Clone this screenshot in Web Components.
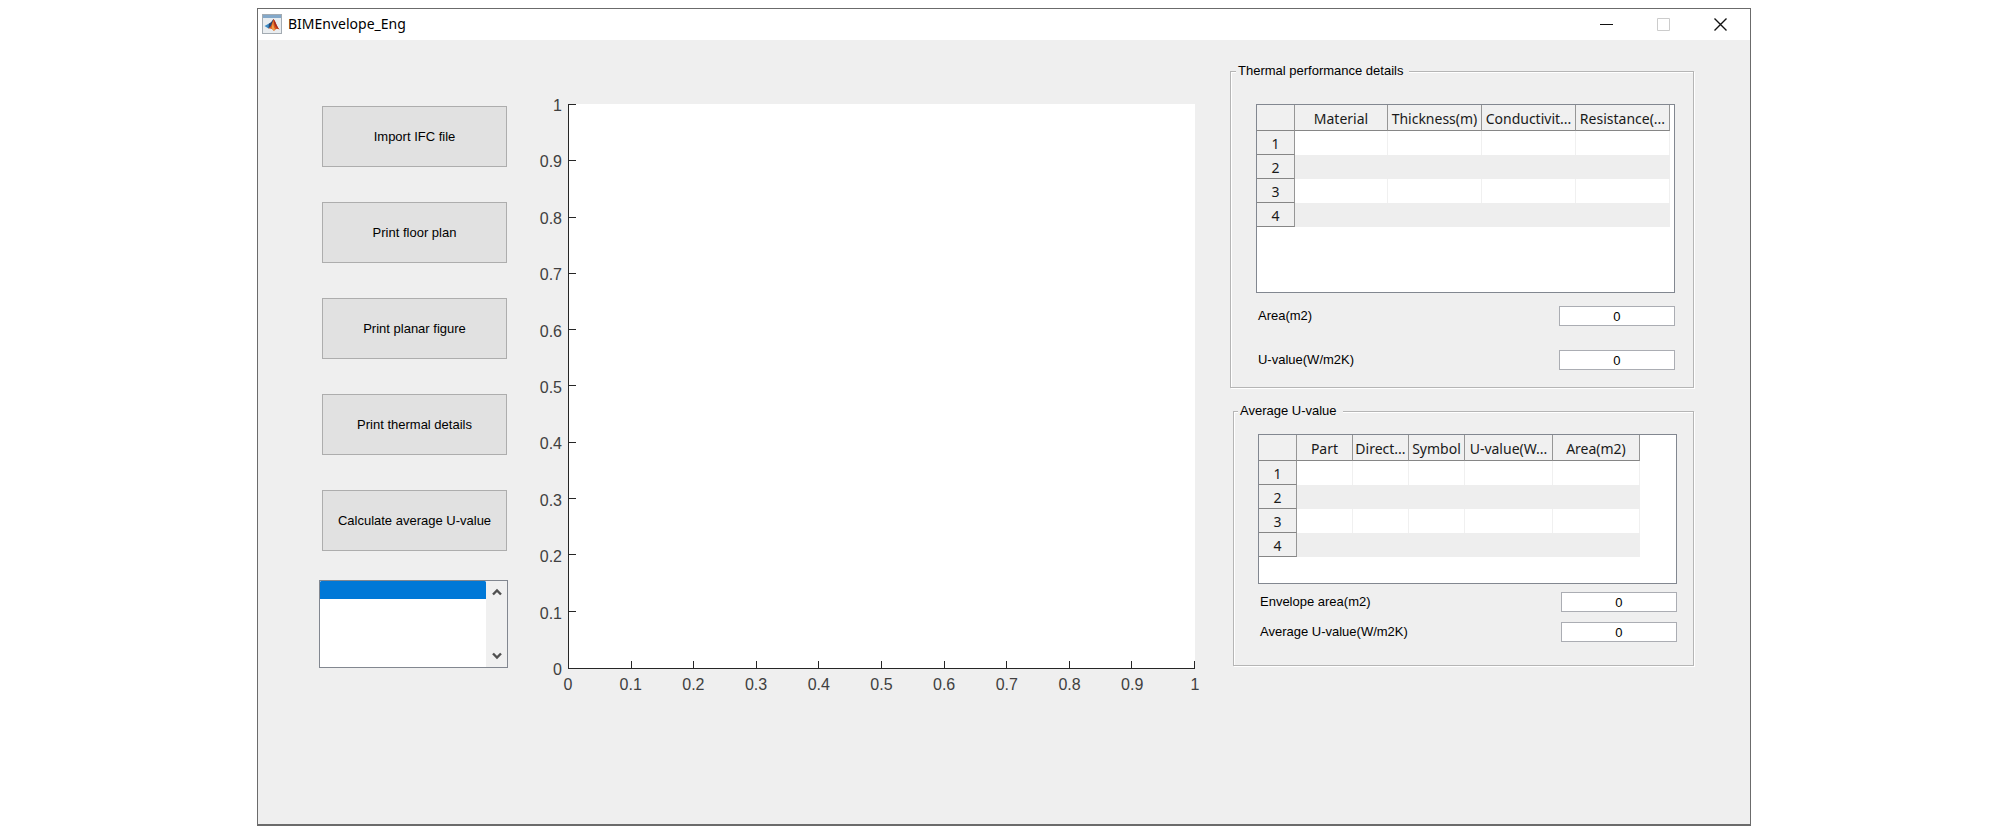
<!DOCTYPE html>
<html lang="en">
<head>
<meta charset="UTF-8">
<title>BIMEnvelope_Eng</title>
<style>
  * { box-sizing: border-box; }

  body {
    margin: 0;
    padding: 8px 12.8% 5px;
    background: #fff;
    color: #000;
    font-family: "Liberation Sans", Arial, sans-serif;
    font-size: 14px;
  }

  .workspace {
    display: grid;
    grid-template-columns: 189px minmax(0, 1fr) 464px;
    column-gap: 35px;
    padding: 57px 56px 130px 61px;
  }

  .actions {
    display: flex;
    flex-direction: column;
    gap: 35px;
    padding-top: 9px;
  }

  .details {
    display: flex;
    flex-direction: column;
    gap: 14px;
  }
</style>
</head>
<body>

<app-window heading="BIMEnvelope_Eng">
  <div class="workspace">
    <div class="actions">
      <action-button>Import IFC file</action-button>
      <action-button>Print floor plan</action-button>
      <action-button>Print planar figure</action-button>
      <action-button>Print thermal details</action-button>
      <action-button>Calculate average U-value</action-button>
      <list-box></list-box>
    </div>

    <plot-axes></plot-axes>

    <div class="details">
      <group-panel heading="Thermal performance details">
        <data-grid columns="Material:93,Thickness(m):94,Conductivit...:94,Resistance(...:94" head="38" height="189"></data-grid>
        <value-field label="Area(m2)"></value-field>
        <value-field label="U-value(W/m2K)"></value-field>
      </group-panel>
      <group-panel class="compact" heading="Average U-value">
        <data-grid columns="Part:56,Direct...:56,Symbol:56,U-value(W...:88,Area(m2):87" head="38" height="150"></data-grid>
        <value-field label="Envelope area(m2)"></value-field>
        <value-field label="Average U-value(W/m2K)"></value-field>
      </group-panel>
    </div>
  </div>
</app-window>

<script>
class AppWindow extends HTMLElement {
  constructor() {
    super();
    this.attachShadow({ mode: "open" });
  }

  connectedCallback() {
    this.shadowRoot.innerHTML = `
      <style>
        :host {
          display: block;
          background: #efefef;
          border: 1px solid #6b6b6b;
          border-bottom: 2px solid #6b6b6b;
        }
        header {
          display: flex;
          align-items: center;
          height: 31px;
          padding: 0 1px 1px 4px;
          box-sizing: border-box;
          background: #fff;
        }
        h1 {
          flex: 1;
          margin: 0 0 0 6px;
          font: 400 14px/20px "Noto Sans", sans-serif;
        }
        button {
          width: 57px;
          height: 30px;
          padding: 0;
          border: 0;
          background: none;
        }
        svg { display: block; margin: auto; }
        header > svg { margin: 0; }
      </style>
      <header>
        <svg width="20" height="20" viewBox="0 0 20 20" aria-hidden="true">
          <rect x=".5" y=".5" width="19" height="19" fill="#e9edf0" stroke="#a3abb2"/>
          <path d="M1 1h18v3H1z" fill="#83a8c9"/>
          <path d="M2.5 12l4.500-2.500 2 1.500-2.500 3.500z" fill="#3b8ac4"/>
          <path d="M7 9.500c2-.5 3-3 4.500-4.500l.5 2-3 6-2.500 1.500z" fill="#29476f"/>
          <path d="M6.500 14.500l2.500-2.500 2.500-7c2 2 3 7 6 10.500-2.500-1-4-.5-5.500 1.500-1-1.500-2.500-3-5.500-2.500z" fill="#d95319"/>
          <path d="M11.500 6c-.5 4 0 7 1.500 9l-1 2c-1-1.500-2-2.500-2.500-3z" fill="#f0a04b"/>
          <path d="M11.500 5c2 2 3 7 6 10.500-4-1.500-5.500-5-6-10.500z" fill="#a62b1f"/>
        </svg>
        <h1>${this.getAttribute("heading")}</h1>
        <button aria-label="Minimize">
          <svg width="13" height="13" stroke="#111"><path d="M0 6.5h13"/></svg>
        </button>
        <button aria-label="Maximize" disabled>
          <svg width="13" height="13" fill="none" stroke="#ccc"><path d="M.5.5h12v12H.5z"/></svg>
        </button>
        <button aria-label="Close">
          <svg width="13" height="13" stroke="#111" stroke-width="1.4"><path d="M.5.5l12 12M12.5.5l-12 12"/></svg>
        </button>
      </header>
      <slot></slot>
    `;
  }
}

class ActionButton extends HTMLElement {
  constructor() {
    super();
    this.attachShadow({ mode: "open" });
  }

  connectedCallback() {
    this.shadowRoot.innerHTML = `
      <style>
        :host { display: block; padding: 0 1px 0 3px; }
        button {
          display: block;
          width: 100%;
          height: 61px;
          padding: 0;
          border: 1px solid #adadad;
          background: #e1e1e1;
          color: inherit;
          font: 13px/16px "Liberation Sans", Arial, sans-serif;
        }
        button:hover { background: #e5f1fb; border-color: #0078d7; }
      </style>
      <button><slot></slot></button>
    `;
  }
}

class ListBox extends HTMLElement {
  constructor() {
    super();
    this.attachShadow({ mode: "open" });
  }

  connectedCallback() {
    this.shadowRoot.innerHTML = `
      <style>
        :host {
          display: flex;
          box-sizing: border-box;
          height: 88px;
          margin-top: -6px;
          border: 1px solid #828790;
          background: #fff;
        }
        select {
          flex: 1;
          min-width: 0;
          padding: 0;
          border: 0;
          outline: 0;
          background: #fff;
          overflow: hidden;
        }
        option { height: 18px; min-height: 18px; padding: 0; }
        option:checked { background: #0078d7 linear-gradient(#0078d7, #0078d7); }
        .scroll {
          display: flex;
          flex-direction: column;
          justify-content: space-between;
          width: 21px;
          background: #f0f0f0;
        }
        button {
          height: 22px;
          padding: 0;
          border: 0;
          background: none;
        }
        svg { display: block; margin: auto; }
      </style>
      <select size="4" aria-label="Elements"><option selected></option></select>
      <div class="scroll">
        <button aria-label="Scroll up">
          <svg width="10" height="8" fill="none" stroke="#505050" stroke-width="2.4"><path d="M1 6.5l4-4 4 4"/></svg>
        </button>
        <button aria-label="Scroll down">
          <svg width="10" height="8" fill="none" stroke="#505050" stroke-width="2.4"><path d="M1 1.5l4 4 4-4"/></svg>
        </button>
      </div>
    `;
  }
}

class PlotAxes extends HTMLElement {
  constructor() {
    super();
    this.attachShadow({ mode: "open" });
  }

  connectedCallback() {
    const ticks = ["0", "0.1", "0.2", "0.3", "0.4", "0.5", "0.6", "0.7", "0.8", "0.9", "1"];
    const labels = (list) => list.map((t) => `<span>${t}</span>`).join("");

    this.shadowRoot.innerHTML = `
      <style>
        :host {
          display: grid;
          grid-template-columns: 19px minmax(0, 1fr);
          column-gap: 6px;
          align-items: start;
          align-content: start;
          color: #404040;
          font-size: 16px;
          line-height: 18px;
        }
        .y {
          display: flex;
          flex-direction: column;
          align-items: flex-end;
          justify-content: space-between;
          height: 582px;
        }
        .plot {
          display: flex;
          box-sizing: border-box;
          height: 565px;
          margin-top: 7px;
          border-left: 1px solid #262626;
          border-bottom: 1px solid #262626;
          background: #fff;
        }
        .marks {
          display: flex;
          justify-content: space-between;
        }
        .marks.y-marks { flex-direction: column; width: 7px; }
        .marks.x-marks { flex: 1; align-items: flex-end; margin-left: -8px; }
        .marks i { background: #262626; }
        .y-marks i { width: 7px; height: 1px; }
        .x-marks i { width: 1px; height: 7px; }
        .y-marks i:last-child { visibility: hidden; }
        .x {
          grid-column: 2;
          display: flex;
          justify-content: space-between;
          margin: -3px -15px 0;
        }
        .x span { width: 30px; text-align: center; }
      </style>
      <div class="y">${labels([...ticks].reverse())}</div>
      <div class="plot">
        <div class="marks y-marks">${"<i></i>".repeat(11)}</div>
        <div class="marks x-marks">${"<i></i>".repeat(11)}</div>
      </div>
      <div class="x">${labels(ticks)}</div>
    `;
  }
}

class GroupPanel extends HTMLElement {
  constructor() {
    super();
    this.attachShadow({ mode: "open" });
  }

  connectedCallback() {
    this.shadowRoot.innerHTML = `
      <style>
        :host { display: block; margin-top: -35px; }
        :host(.compact) { margin: 0 0 0 3px; }
        fieldset {
          min-width: 0;
          margin: 0;
          padding: 24px 18px 17px 25px;
          border: 1px solid #b5b5b5;
          box-shadow: 1px 1px 0 #fff, inset 1px 1px 0 #fff;
        }
        :host(.compact) fieldset { padding: 14px 16px 23px 24px; }
        legend {
          margin-left: -20px;
          padding: 0 6px 0 2px;
          background: #efefef;
          font-size: 13px;
          line-height: 18px;
        }
        .fields {
          display: flex;
          flex-direction: column;
          gap: 24px;
          padding-top: 13px;
        }
        :host(.compact) .fields { gap: 10px; padding-top: 8px; }
      </style>
      <fieldset>
        <legend>${this.getAttribute("heading")}</legend>
        <slot name="grid"></slot>
        <div class="fields"><slot></slot></div>
      </fieldset>
    `;
    // the table keeps its own gap, only the fields below share one
    this.querySelector("data-grid").slot = "grid";
  }
}

class DataGrid extends HTMLElement {
  constructor() {
    super();
    this.attachShadow({ mode: "open" });
  }

  connectedCallback() {
    const columns = this.getAttribute("columns").split(",").map((c) => c.split(":"));
    const head = Number(this.getAttribute("head"));
    const total = columns.reduce((sum, c) => sum + Number(c[1]), head);

    this.shadowRoot.innerHTML = `
      <style>
        :host {
          display: block;
          box-sizing: border-box;
          height: ${this.getAttribute("height")}px;
          border: 1px solid #828790;
          background: #fff;
          font-family: "Noto Sans", sans-serif;
          font-size: 14px;
        }
        table {
          width: ${total}px;
          table-layout: fixed;
          border-collapse: separate;
          border-spacing: 0;
        }
        th, td {
          box-sizing: border-box;
          height: 24px;
          padding: 0;
          line-height: 20px;
        }
        th {
          padding-top: 2px;
          border-right: 1px solid #969696;
          border-bottom: 1px solid #868686;
          background: #f0f0f0;
          color: #1a1a1a;
          font-weight: 400;
          white-space: nowrap;
        }
        thead th { height: 26px; }
        td { border-right: 1px solid #f0f0f0; }
        tr:nth-child(even) td { background: #eee; border-color: #eee; }
      </style>
      <table>
        <colgroup><col style="width:${head}px">${columns.map((c) => `<col style="width:${c[1]}px">`).join("")}</colgroup>
        <thead>
          <tr><th></th>${columns.map((c) => `<th scope="col">${c[0]}</th>`).join("")}</tr>
        </thead>
        <tbody>
          ${[1, 2, 3, 4].map((n) => `<tr><th scope="row">${n}</th>${"<td></td>".repeat(columns.length)}</tr>`).join("")}
        </tbody>
      </table>
    `;
  }
}

class ValueField extends HTMLElement {
  constructor() {
    super();
    this.attachShadow({ mode: "open" });
  }

  connectedCallback() {
    this.shadowRoot.innerHTML = `
      <style>
        :host {
          display: flex;
          align-items: center;
          justify-content: space-between;
          padding-left: 2px;
          font-size: 13px;
          line-height: 20px;
        }
        input {
          box-sizing: border-box;
          width: 116px;
          height: 20px;
          padding: 0;
          border: 1px solid #abadb3;
          background: #fff;
          color: #000;
          font: 13px "Liberation Sans", Arial, sans-serif;
          text-align: center;
        }
      </style>
      <label for="value">${this.getAttribute("label")}</label>
      <input id="value" type="text" value="0">
    `;
  }
}

customElements.define("app-window", AppWindow);
customElements.define("action-button", ActionButton);
customElements.define("list-box", ListBox);
customElements.define("plot-axes", PlotAxes);
customElements.define("data-grid", DataGrid);
customElements.define("value-field", ValueField);
customElements.define("group-panel", GroupPanel);
</script>
</body>
</html>
